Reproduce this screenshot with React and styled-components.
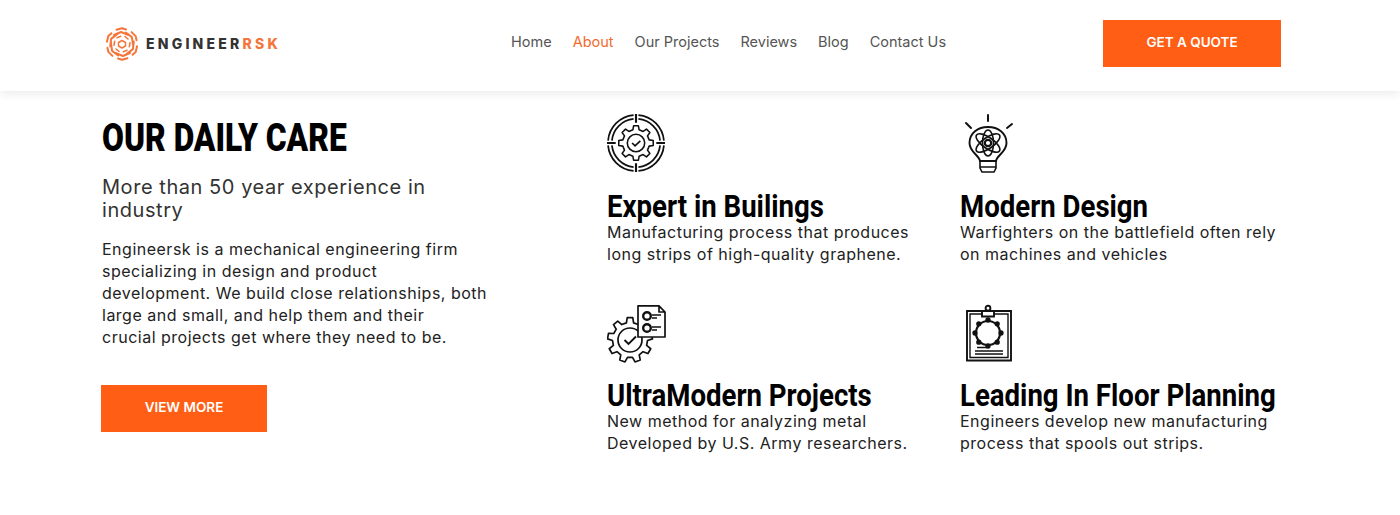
import React from 'react'
import styled, { createGlobalStyle } from 'styled-components'

const GlobalStyle = createGlobalStyle`
  html, body {
    margin: 0;
    padding: 0;
    background: #fff;
  }
  * {
    box-sizing: border-box;
  }
`

const BODY_FONT = `Inter, "Noto Sans", "Open Sans", sans-serif`
const HEAD_FONT = `"Roboto", "Liberation Sans", sans-serif`

const gearPath = (cx, cy, outer, inner, teeth) => {
  const step = (Math.PI * 2) / teeth
  const pts = []
  for (let i = 0; i < teeth; i++) {
    const a = i * step - Math.PI / 2
    const w = step * 0.22
    pts.push([a - w * 1.35, inner], [a - w * 0.8, outer], [a + w * 0.8, outer], [a + w * 1.35, inner])
  }
  return pts
    .map(([a, r], i) => `${i ? 'L' : 'M'}${(cx + Math.cos(a) * r).toFixed(2)} ${(cy + Math.sin(a) * r).toFixed(2)}`)
    .join(' ') + ' Z'
}

const LogoMark = () => (
  <svg width="34" height="34" viewBox="0 0 34 34" fill="none" stroke="#f4763c" strokeWidth="2" strokeLinecap="round" strokeLinejoin="round">
    {[0, 60, 120, 180, 240, 300].map(a => (
      <g key={a} transform={`rotate(${a} 17 17)`}>
        <path d="M11.5 2.8 L17 1.2 L21 2.5" />
        <path d="M9 8 L16 5 L23.5 8" />
        <path d="M20 9.5 L23 12" strokeWidth="1.6" />
      </g>
    ))}
    <path d="M17 13.5 L20.5 15.5 V19 L17 21 L13.5 19 V15.5 Z" strokeWidth="1.5" />
  </svg>
)

const TargetGearIcon = () => (
  <svg width="58" height="58" viewBox="0 0 60 60" fill="none" stroke="#111" strokeWidth="1.6">
    <g strokeWidth="1.8">
      <path d="M32.5 5.1 A25 25 0 0 1 54.9 27.5 M54.9 32.5 A25 25 0 0 1 32.5 54.9 M27.5 54.9 A25 25 0 0 1 5.1 32.5 M5.1 27.5 A25 25 0 0 1 27.5 5.1" />
      <path d="M32.5 1.1 A29 29 0 0 1 58.9 27.5 M58.9 32.5 A29 29 0 0 1 32.5 58.9 M27.5 58.9 A29 29 0 0 1 1.1 32.5 M1.1 27.5 A29 29 0 0 1 27.5 1.1" />
    </g>
    <path d="M30 0 V9 M30 51 V60 M0 30 H9 M51 30 H60" strokeWidth="2.2" />
    <path d={gearPath(30, 30, 18, 14, 8)} strokeLinejoin="round" />
    <circle cx="30" cy="30" r="9" />
    <path d="M26 30 L29 33 L34.5 27.8" strokeWidth="1.8" />
  </svg>
)

const BulbIcon = () => (
  <svg width="60" height="60" viewBox="0 -1 60 60" fill="none" stroke="#111" strokeWidth="1.6">
    <path d="M28 0 V6 M6 8 L11 13 M52 9 L47 13" strokeWidth="2" strokeLinecap="round" />
    <path d="M20 46 C19 40 9.5 37 9.5 28 C9.5 18 18 12 28 12 C38 12 46.5 18 46.5 28 C46.5 37 37 40 36 46 Z" strokeWidth="1.9" />
    <path d="M20 46 V53 L22 57 H34 L36 53 V46 M20 52 H36" />
    <ellipse cx="28" cy="28" rx="14" ry="5.5" transform="rotate(35 28 28)" />
    <ellipse cx="28" cy="28" rx="14" ry="5.5" transform="rotate(-35 28 28)" />
    <ellipse cx="28" cy="28" rx="5.5" ry="13" />
    <circle cx="28" cy="28" r="3.2" strokeWidth="2.2" />
  </svg>
)

const GearDocIcon = () => (
  <svg width="60" height="60" viewBox="0 -2 60 60" fill="none" stroke="#111" strokeWidth="1.7">
    <path d={gearPath(23, 35, 22.5, 17.5, 9)} strokeLinejoin="round" fill="#fff" />
    <circle cx="23" cy="35" r="12" />
    <path d="M17.5 35 L21.5 39 L29 31.5" strokeWidth="1.9" />
    <path d="M31 0.8 H52 L58 7 V32 H31 Z M52 0.8 V7 H58" fill="#fff" strokeLinejoin="round" />
    <circle cx="40" cy="11" r="3.8" strokeWidth="2.4" />
    <circle cx="40" cy="23" r="3.8" strokeWidth="2.4" />
    <path d="M45 10 H54 M45 13 H50 M45 22 H54 M45 25 H50" strokeWidth="1.5" />
  </svg>
)

const ClipboardIcon = () => (
  <svg width="60" height="60" viewBox="0 -2 60 60" fill="none" stroke="#111" strokeWidth="1.9">
    <path d="M7 6 H51 V55.5 H7 Z" />
    <path d="M10 9 H48 V52.5 H10 Z" strokeWidth="1.4" />
    <path d="M22 11.5 V6 H34 V11.5 Z" fill="#fff" />
    <circle cx="28" cy="3.2" r="2.4" />
    <circle cx="28" cy="28" r="12" strokeWidth="2.2" />
    {[0, 45, 90, 135, 180, 225, 270, 315].map(a => (
      <circle
        key={a}
        cx={28 + Math.cos((a * Math.PI) / 180) * 13}
        cy={28 + Math.sin((a * Math.PI) / 180) * 13}
        r="1.7"
        fill="#111"
      />
    ))}
    <path d="M17 42.5 H27 M15 46 H43 M15 49 H43" strokeWidth="1.6" />
  </svg>
)

const features = [
  { icon: <TargetGearIcon />, title: 'Expert in Builings', lines: ['Manufacturing process that produces', 'long strips of high-quality graphene.'] },
  { icon: <BulbIcon />, title: 'Modern Design', lines: ['Warfighters on the battlefield often rely', 'on machines and vehicles'] },
  { icon: <GearDocIcon />, title: 'UltraModern Projects', lines: ['New method for analyzing metal', 'Developed by U.S. Army researchers.'] },
  { icon: <ClipboardIcon />, title: 'Leading In Floor Planning', lines: ['Engineers develop new manufacturing', 'process that spools out strips.'] }
]

const navItems = ['Home', 'About', 'Our Projects', 'Reviews', 'Blog', 'Contact Us']

const App = () => (
  <Page>
    <GlobalStyle />
    <Header>
      <Logo>
        <LogoMark />
        <LogoText>ENGINEER<span>RSK</span></LogoText>
      </Logo>
      <Nav>
        {navItems.map(item => (
          <NavLink key={item} href="#" $active={item === 'About'}>{item}</NavLink>
        ))}
      </Nav>
      <QuoteButton href="#">GET A QUOTE</QuoteButton>
    </Header>
    <Main>
      <Intro>
        <Title>OUR DAILY CARE</Title>
        <Subtitle>More than 50 year experience in industry</Subtitle>
        <IntroText>
          Engineersk is a mechanical engineering firm<br />
          specializing in design and product<br />
          development. We build close relationships, both<br />
          large and small, and help them and their<br />
          crucial projects get where they need to be.
        </IntroText>
        <MoreButton href="#">VIEW MORE</MoreButton>
      </Intro>
      <FeatureGrid>
        {features.map(f => (
          <Feature key={f.title}>
            <IconBox>{f.icon}</IconBox>
            <FeatureTitle>{f.title}</FeatureTitle>
            <FeatureText>{f.lines[0]}<br />{f.lines[1]}</FeatureText>
          </Feature>
        ))}
      </FeatureGrid>
    </Main>
  </Page>
)

const Page = styled.div`
  width: 1400px;
  height: 515px;
  overflow: hidden;
  background: #fff;
  font-family: ${BODY_FONT};
`

const Header = styled.header`
  height: 91px;
  padding: 0 119px 4px 105px;
  display: flex;
  align-items: center;
  background: #fff;
  box-shadow: 0 2px 10px rgba(0, 0, 0, 0.09);
`

const Logo = styled.div`
  display: flex;
  align-items: center;
  gap: 7px;
  width: 406px;
`

const LogoText = styled.span`
  font-family: ${BODY_FONT};
  font-weight: 800;
  font-size: 14px;
  letter-spacing: 3.2px;
  color: #333;
  span {
    color: #f4763c;
  }
`

const Nav = styled.nav`
  display: flex;
  gap: 21px;
  flex: 1;
  margin-bottom: 3px;
`

const NavLink = styled.a`
  font-size: 14.5px;
  line-height: 22px;
  text-decoration: none;
  color: ${p => (p.$active ? '#f26a2e' : '#555')};
`

const ActionButton = styled.a`
  display: flex;
  align-items: center;
  justify-content: center;
  height: 47px;
  padding-bottom: 3px;
  background: #ff5e14;
  color: #fff;
  font-size: 13.5px;
  font-weight: 600;
  text-decoration: none;
`

const QuoteButton = styled(ActionButton)`
  width: 178px;
`

const MoreButton = styled(ActionButton)`
  width: 166px;
  margin: 37px 0 0 -1px;
`

const Main = styled.main`
  display: grid;
  grid-template-columns: 505px 1fr;
  padding: 24px 0 0 102px;
`

const Intro = styled.section`
  width: 392px;
`

const Title = styled.h1`
  margin: 0;
  font-family: ${HEAD_FONT};
  font-weight: 900;
  font-size: 39px;
  line-height: 46px;
  color: #000;
  display: inline-block;
  transform: scaleX(0.814);
  transform-origin: left center;
  white-space: nowrap;
`

const Subtitle = styled.h2`
  margin: 15px 0 0;
  font-weight: 400;
  font-size: 20px;
  line-height: 23px;
  letter-spacing: 0.55px;
  color: #333;
`

const IntroText = styled.p`
  margin: 16px 0 0;
  font-size: 16px;
  line-height: 22px;
  letter-spacing: 0.5px;
  color: #222;
  white-space: nowrap;
`

const FeatureGrid = styled.section`
  display: grid;
  grid-template-columns: 353px 1fr;
  grid-auto-rows: 189px;
  margin-top: -1px;
`

const Feature = styled.article`
  display: flex;
  flex-direction: column;
  align-items: flex-start;
`

const IconBox = styled.div`
  height: 60px;
  display: flex;
  svg {
    display: block;
  }
`

const FeatureTitle = styled.h3`
  margin: 17px 0 0;
  font-family: ${HEAD_FONT};
  font-weight: 700;
  font-size: 32px;
  line-height: 30px;
  color: #000;
  transform: scaleX(0.862);
  transform-origin: left center;
  white-space: nowrap;
`

const FeatureText = styled.p`
  margin: 0;
  font-size: 16px;
  line-height: 22px;
  letter-spacing: 0.5px;
  color: #222;
  white-space: nowrap;
`

export default App
